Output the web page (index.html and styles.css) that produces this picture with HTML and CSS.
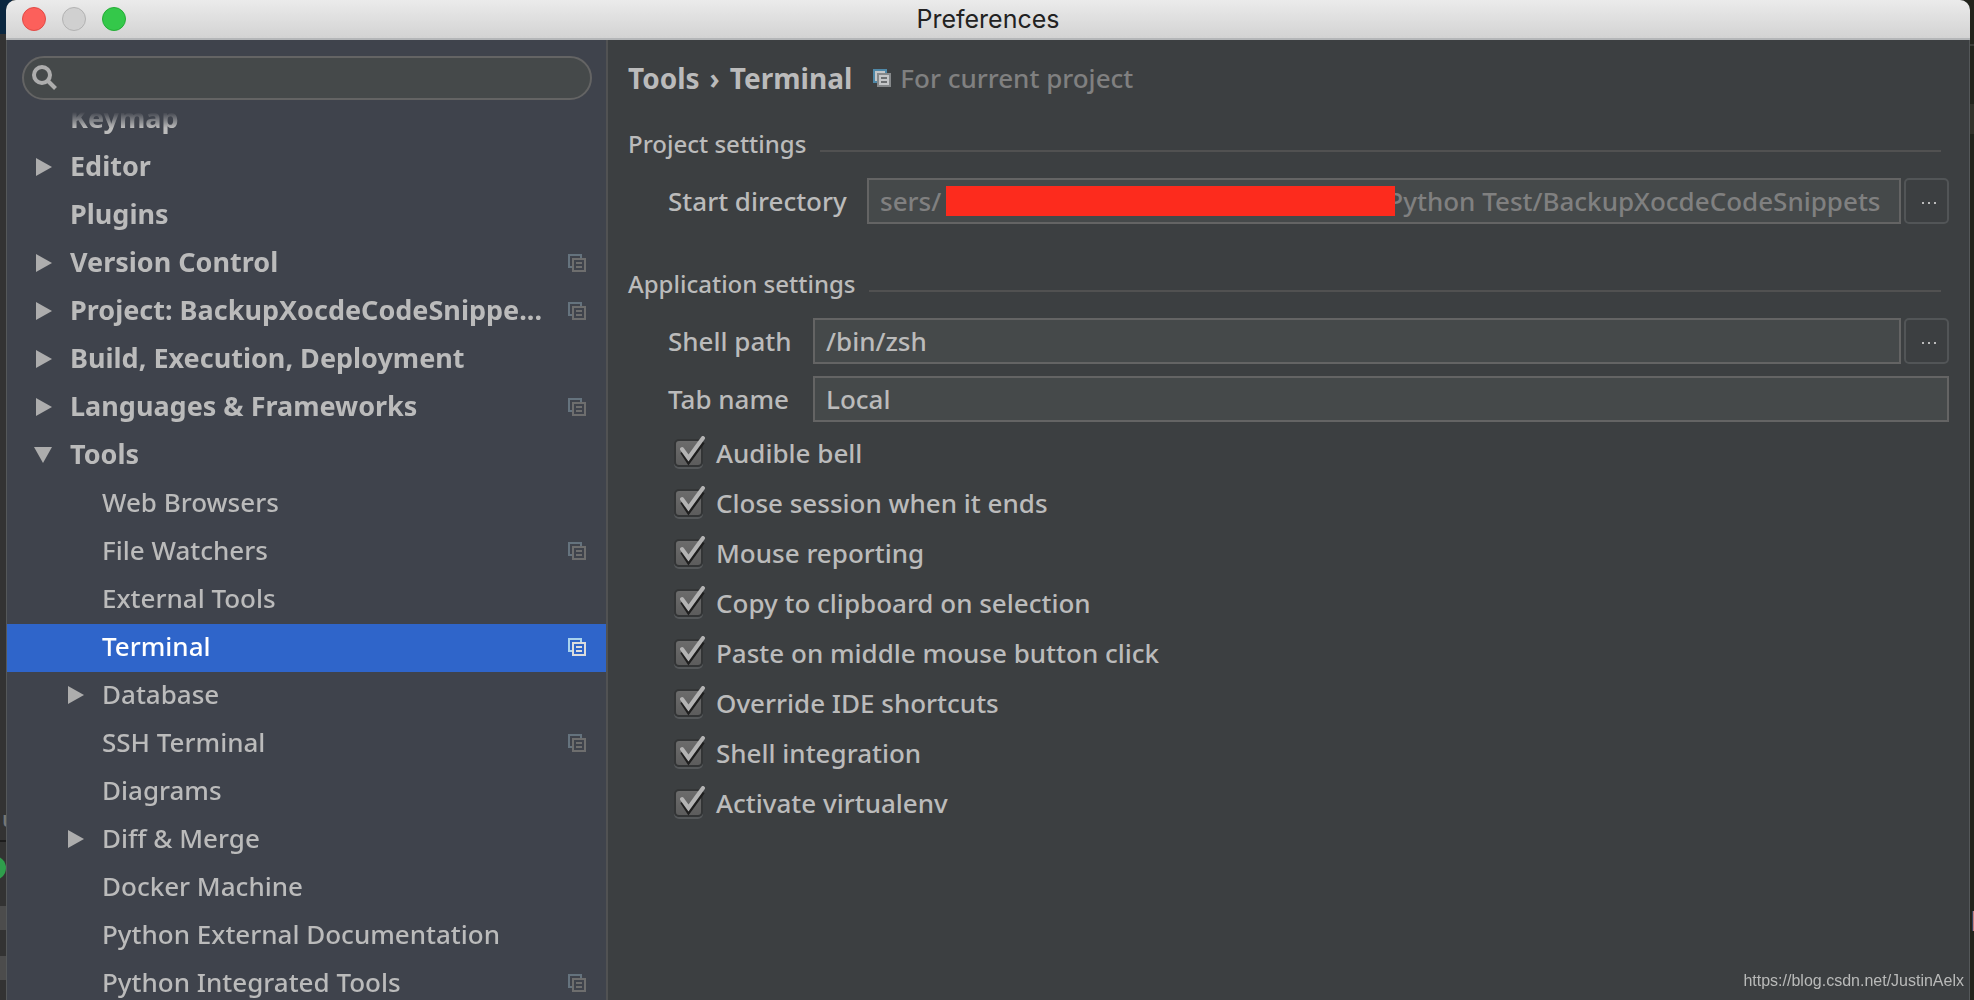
FILE: index.html
```html
<!DOCTYPE html>
<html lang="en">
<head>
<meta charset="utf-8">
<title>Preferences</title>
<link rel="stylesheet" href="styles.css">
</head>
<body>
<svg class="defs" width="0" height="0" aria-hidden="true">
  <symbol id="scope" viewBox="0 0 18 18">
    <path class="scope-back" d="M0 0H14V4H12V2H2V12H4V14H0Z"/>
    <path class="scope-front" fill-rule="evenodd" d="M4 4H18V18H4ZM6 6V16H16V6ZM8 8H14V10H8ZM8 12H14V14H8Z"/>
  </symbol>
  <symbol id="scope-filled" viewBox="0 0 18 18">
    <path fill="#4f88a8" d="M0 0H14V14H0Z"/>
    <path fill="#c4c6c8" d="M2 2H12V12H2Z"/>
    <path fill="#85888a" d="M4 4H18V18H4Z"/>
    <path fill="#c4c6c8" d="M6 6H16V16H6Z"/>
    <path fill="#6c6f71" d="M8 8H14V10H8ZM8 12H14V14H8Z"/>
  </symbol>
  <symbol id="right" viewBox="0 0 16 18"><path d="M0 0L16 9L0 18Z"/></symbol>
  <symbol id="down" viewBox="0 0 18 16"><path d="M0 0H18L9 16Z"/></symbol>
</svg>
<div class="behind" aria-hidden="true"><span class="tab-char">u</span><span class="run-dot"></span><span class="code-char">b</span></div>
<div class="window">
  <header class="titlebar">
    <div class="lights">
      <button class="light close" aria-label="Close"></button>
      <button class="light minimize" aria-label="Minimize" disabled></button>
      <button class="light zoom" aria-label="Zoom"></button>
    </div>
    <h1 class="title">Preferences</h1>
  </header>
  <div class="body">
    <aside class="sidebar">
      <label class="search">
        <svg class="search-icon" viewBox="0 0 26 26" aria-hidden="true"><circle cx="10" cy="10" r="8"/><path d="M15.500 15.500L23.500 23.500"/></svg>
        <input type="search" aria-label="Search settings">
      </label>
      <nav class="tree" aria-label="Settings">
        <a class="row top" href="#keymap"><span class="arrow"></span><span class="name">Keymap</span></a>
        <a class="row top" href="#editor"><span class="arrow"><svg class="right"><use href="#right"/></svg></span><span class="name">Editor</span></a>
        <a class="row top" href="#plugins"><span class="arrow"></span><span class="name">Plugins</span></a>
        <a class="row top" href="#vcs"><span class="arrow"><svg class="right"><use href="#right"/></svg></span><span class="name">Version Control</span><svg class="scope"><use href="#scope"/></svg></a>
        <a class="row top" href="#project"><span class="arrow"><svg class="right"><use href="#right"/></svg></span><span class="name">Project: BackupXocdeCodeSnippe...</span><svg class="scope"><use href="#scope"/></svg></a>
        <a class="row top" href="#build"><span class="arrow"><svg class="right"><use href="#right"/></svg></span><span class="name">Build, Execution, Deployment</span></a>
        <a class="row top" href="#languages"><span class="arrow"><svg class="right"><use href="#right"/></svg></span><span class="name">Languages &amp; Frameworks</span><svg class="scope"><use href="#scope"/></svg></a>
        <a class="row top" href="#tools"><span class="arrow"><svg class="down"><use href="#down"/></svg></span><span class="name">Tools</span></a>
        <a class="row child" href="#browsers"><span class="arrow"></span><span class="name">Web Browsers</span></a>
        <a class="row child" href="#watchers"><span class="arrow"></span><span class="name">File Watchers</span><svg class="scope"><use href="#scope"/></svg></a>
        <a class="row child" href="#external"><span class="arrow"></span><span class="name">External Tools</span></a>
        <a class="row child selected" href="#terminal" aria-current="page"><span class="arrow"></span><span class="name">Terminal</span><svg class="scope"><use href="#scope"/></svg></a>
        <a class="row child" href="#database"><span class="arrow"><svg class="right"><use href="#right"/></svg></span><span class="name">Database</span></a>
        <a class="row child" href="#ssh"><span class="arrow"></span><span class="name">SSH Terminal</span><svg class="scope"><use href="#scope"/></svg></a>
        <a class="row child" href="#diagrams"><span class="arrow"></span><span class="name">Diagrams</span></a>
        <a class="row child" href="#diff"><span class="arrow"><svg class="right"><use href="#right"/></svg></span><span class="name">Diff &amp; Merge</span></a>
        <a class="row child" href="#docker"><span class="arrow"></span><span class="name">Docker Machine</span></a>
        <a class="row child" href="#pydocs"><span class="arrow"></span><span class="name">Python External Documentation</span></a>
        <a class="row child" href="#pytools"><span class="arrow"></span><span class="name">Python Integrated Tools</span><svg class="scope"><use href="#scope"/></svg></a>
      </nav>
    </aside>
    <main class="content">
      <div class="crumbs">
        <h2 class="crumb"><span>Tools</span><span>›</span><span>Terminal</span></h2>
        <svg class="scope bright"><use href="#scope-filled"/></svg>
        <span class="hint">For current project</span>
      </div>
      <section class="group">
        <h3 class="group-title">Project settings</h3>
        <div class="field">
          <label for="start">Start directory</label>
          <div class="path">
            <input class="text placeholder" id="start" type="text" value="sers/&nbsp;&nbsp;&nbsp;&nbsp;&nbsp;&nbsp;&nbsp;&nbsp;&nbsp;&nbsp;&nbsp;&nbsp;&nbsp;&nbsp;&nbsp;&nbsp;&nbsp;&nbsp;&nbsp;&nbsp;&nbsp;&nbsp;&nbsp;&nbsp;&nbsp;&nbsp;&nbsp;&nbsp;&nbsp;&nbsp;&nbsp;&nbsp;&nbsp;&nbsp;&nbsp;&nbsp;&nbsp;&nbsp;&nbsp;&nbsp;&nbsp;&nbsp;&nbsp;&nbsp;&nbsp;&nbsp;&nbsp;&nbsp;&nbsp;&nbsp;&nbsp;&nbsp;&nbsp;&nbsp;&nbsp;&nbsp;&nbsp;&nbsp;&nbsp;&nbsp;&nbsp;&nbsp;&nbsp;&nbsp;&nbsp;&nbsp;Python Test/BackupXocdeCodeSnippets">
            <span class="redaction"></span>
          </div>
          <button class="browse" aria-label="Browse start directory"><span class="dots"></span></button>
        </div>
      </section>
      <section class="group">
        <h3 class="group-title">Application settings</h3>
        <div class="field">
          <label class="short" for="shell">Shell path</label>
          <input class="text" id="shell" type="text" value="/bin/zsh">
          <button class="browse" aria-label="Browse shell path"><span class="dots"></span></button>
        </div>
        <div class="field">
          <label class="short" for="tab">Tab name</label>
          <input class="text" id="tab" type="text" value="Local">
        </div>
        <div class="checks">
          <label class="check"><input type="checkbox" checked><svg class="tick" viewBox="0 0 32 34"><use href="#tickmark"/></svg>Audible bell</label>
          <label class="check"><input type="checkbox" checked><svg class="tick" viewBox="0 0 32 34"><use href="#tickmark"/></svg>Close session when it ends</label>
          <label class="check"><input type="checkbox" checked><svg class="tick" viewBox="0 0 32 34"><use href="#tickmark"/></svg>Mouse reporting</label>
          <label class="check"><input type="checkbox" checked><svg class="tick" viewBox="0 0 32 34"><use href="#tickmark"/></svg>Copy to clipboard on selection</label>
          <label class="check"><input type="checkbox" checked><svg class="tick" viewBox="0 0 32 34"><use href="#tickmark"/></svg>Paste on middle mouse button click</label>
          <label class="check"><input type="checkbox" checked><svg class="tick" viewBox="0 0 32 34"><use href="#tickmark"/></svg>Override IDE shortcuts</label>
          <label class="check"><input type="checkbox" checked><svg class="tick" viewBox="0 0 32 34"><use href="#tickmark"/></svg>Shell integration</label>
          <label class="check"><input type="checkbox" checked><svg class="tick" viewBox="0 0 32 34"><use href="#tickmark"/></svg>Activate virtualenv</label>
        </div>
      </section>
    </main>
  </div>
</div>
<svg class="defs" width="0" height="0" aria-hidden="true">
  <symbol id="tickmark" viewBox="0 0 32 34">
    <path d="M8 16L14.500 26L29 6" fill="none" stroke="#1e1e1e" stroke-width="4"/>
    <path d="M8 13L14.500 22L29 2" fill="none" stroke="#b4b4b4" stroke-width="4" stroke-linecap="round"/>
  </symbol>
</svg>
<div class="watermark">https://blog.csdn.net/JustinAelx</div>
</body>
</html>
```
FILE: styles.css
```css
* { box-sizing: border-box; }

body {
  margin: 0;
  height: 100vh;
  overflow: hidden;
  background: #22241c;
  color: #bbb;
  font: 500 26px/32px "Noto Sans", "Open Sans", sans-serif;
}

h1, h2, h3 { margin: 0; font-size: inherit; font-weight: inherit; }
button, input { font: inherit; color: inherit; margin: 0; }
a { color: inherit; text-decoration: none; }
.defs { position: absolute; }

/* Slivers of the editor that stay visible round the dialog */
.behind {
  position: absolute;
  inset: 0;
  overflow: hidden;
  background:
    linear-gradient(#0b2740 34px, #333 34px 840px, #1c1c1c 840px 842px, #333 842px 906px, #4c4c4c 906px 930px, #333 930px 956px, #4c4c4c 956px 980px, #333 980px) left / 12px 100% no-repeat,
    linear-gradient(#22241c 44px, #3c3d38 44px 46px, #22241c 46px 104px, #32322a 104px 134px, #22241c 134px) right / 12px 100% no-repeat;
}
.run-dot { position: absolute; left: -18px; top: 856px; width: 24px; height: 24px; border-radius: 50%; background: #2f9e4c; }
.tab-char { position: absolute; left: 2px; top: 802px; color: #777; font-size: 22px; }
.code-char { position: absolute; right: -12px; top: 906px; color: #d08080; font: 26px/32px "DejaVu Sans Mono", monospace; }

.window {
  position: relative;
  height: 100%;
  margin: 0 4px 0 6px;
  display: flex;
  flex-direction: column;
  border-radius: 10px 10px 0 0;
  overflow: hidden;
  background: #3c3f41;
}

.titlebar {
  flex: none;
  height: 40px;
  padding: 0 16px;
  display: grid;
  grid-template-columns: 1fr auto 1fr;
  align-items: center;
  background: linear-gradient(#ebebeb, #d3d3d3);
  border-bottom: 2px solid #b4b6b8;
}
.lights { display: flex; gap: 16px; }
.light { width: 24px; height: 24px; padding: 0; border: 1px solid; border-radius: 50%; }
.close { background: #fc605b; border-color: #e04a46; }
.minimize { background: #d0d0d0; border-color: #b2b2b2; }
.zoom { background: #34c84a; border-color: #24ad36; }
.title { font: 400 25px/32px Inter, sans-serif; color: #222; }

.body { flex: 1; min-height: 0; display: flex; border-left: 1px solid #55585a; border-right: 1px solid #55585a; }

.sidebar {
  flex: none;
  width: 601px;
  display: flex;
  flex-direction: column;
  background: #3f434c;
  border-right: 2px solid #515253;
}
.search {
  flex: none;
  height: 44px;
  margin: 16px 14px 12px 15px;
  padding: 0 16px 0 8px;
  display: flex;
  align-items: center;
  gap: 8px;
  border: 2px solid #646464;
  border-radius: 22px;
  background: #45494a;
}
.search-icon { width: 26px; height: 26px; fill: none; stroke: #adadad; stroke-width: 4; }
.search input { flex: 1; min-width: 0; border: 0; background: none; outline: 0; }

/* The list is scrolled part of a row down and fades out under the search box */
.tree {
  flex: 1;
  min-height: 0;
  display: flex;
  flex-direction: column;
  overflow: hidden;
  mask-image: linear-gradient(transparent, #000 16px);
}
.row { flex: none; height: 48px; padding: 0 20px 2px 29px; display: flex; align-items: center; }
.row:first-child { margin-top: -16px; }
.row.child { padding-left: 61px; }
.row.top { font-size: 27px; font-weight: 700; }
.row.selected { background: #2f65ca; color: #fff; }
.arrow { width: 34px; display: flex; }
.arrow svg { fill: #adadad; }
.right { width: 16px; height: 18px; }
.down { width: 18px; height: 16px; margin-left: -2px; }
.name { flex: 1; padding-bottom: 2px; white-space: nowrap; }
.scope { flex: none; width: 18px; height: 18px; --back: #65737e; --front: #6e6e6e; }
.scope-back { fill: var(--back); }
.scope-front { fill: var(--front); }
.selected .scope { --back: #a9d3ee; --front: #dcdcdc; }
.scope.bright { margin: 0 9px 0 21px; }

.content { flex: 1; min-width: 0; padding: 22px 20px 0; }
.crumbs { display: flex; align-items: center; height: 32px; }
.crumb { display: flex; gap: 10px; font-size: 28px; font-weight: 700; }
.hint { color: #808080; }

.group { display: flex; flex-direction: column; margin-top: 34px; }
.group-title { display: flex; align-items: center; gap: 14px; height: 32px; font-size: 24px; margin-bottom: 18px; }
.group-title::after { content: ""; flex: 1; height: 2px; margin: 14px 8px 0 0; background: #515151; }
.field { display: flex; align-items: center; height: 46px; margin-bottom: 12px; padding-left: 40px; }
.group:first-of-type .field { margin-bottom: 10px; }
.field label { width: 199px; flex: none; }
.field .short { width: 145px; }
.path { position: relative; flex: 1; display: flex; min-width: 0; }
.text { flex: 1; min-width: 0; height: 46px; padding: 0 11px; border: 2px solid #646464; background: #45494a; outline: 0; }
.placeholder { color: #808080; }
.redaction { position: absolute; left: 79px; right: 506px; top: 8px; height: 30px; background: #fd2b1d; }
.browse { flex: none; width: 45px; height: 46px; margin-left: 3px; padding: 0; border: 2px solid #525557; border-radius: 5px; background: #3c3f41; display: flex; align-items: center; justify-content: center; }
.dots { width: 2px; height: 2px; margin: 4px 0 0 4px; background: #bbb; box-shadow: -6px 0 #bbb, 6px 0 #bbb; }

.checks { display: flex; flex-direction: column; margin-top: -6px; padding-left: 46px; }
.check { position: relative; height: 50px; display: flex; align-items: center; gap: 13px; }
.check input {
  appearance: none;
  width: 29px;
  height: 28px;
  border: 2px solid #333536;
  border-radius: 5px;
  background: linear-gradient(#6c6c6c, #5c5c5c);
  box-shadow: 0 2px #55585a;
}
.tick { position: absolute; left: 0; top: 8px; width: 32px; height: 34px; pointer-events: none; }

.watermark { position: fixed; right: 10px; bottom: 8px; font: 16px/22px "Liberation Sans", Arial, sans-serif; color: #b9bab9; }
```
